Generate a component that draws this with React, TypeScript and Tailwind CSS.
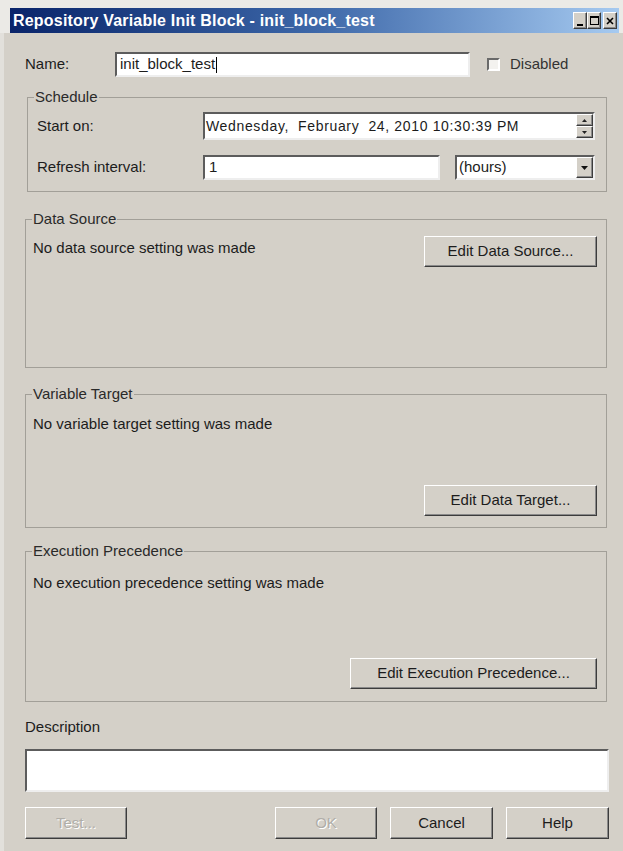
import type { ReactNode } from "react";

const FONT = "font-['Liberation_Sans',Arial,sans-serif]";

// classic sunken field edge
const sunken =
  "border-2 border-t-[#5c5c5c] border-l-[#5c5c5c] border-b-[#eeeeee] border-r-[#eeeeee] bg-white";

// classic raised button edge
const raised =
  "border border-t-[#ffffff] border-l-[#ffffff] border-b-[#3c3c3c] border-r-[#3c3c3c] shadow-[inset_-1px_-1px_0_#8a8a8a] bg-[#d4d0c8]";

const Button = ({
  label,
  width,
  disabled,
}: {
  label: string;
  width: string;
  disabled?: boolean;
}) => (
  <button
    className={`${raised} ${width} flex h-full items-center justify-center text-[15px] ${
      disabled ? "text-[#b0aea8] [text-shadow:1px_1px_0_#ffffff]" : "text-[#1c1c1c]"
    }`}
  >
    {label}
  </button>
);

const GroupBox = ({
  title,
  className,
  bodyClassName,
  children,
}: {
  title: string;
  className: string;
  bodyClassName: string;
  children: ReactNode;
}) => (
  <div className={`flex flex-col border border-[#a29f98] ${className}`}>
    <span className="-mt-[9px] ml-[6px] block h-[16px] w-fit bg-[#d4d0c8] px-[1px] leading-[16px] text-[#2a2a2a]">
      {title}
    </span>
    <div className={`flex flex-1 flex-col ${bodyClassName}`}>{children}</div>
  </div>
);

const TitleButton = ({ children, className = "" }: { children: ReactNode; className?: string }) => (
  <div className={`${raised} flex h-[17px] w-[14px] items-center justify-center ${className}`}>
    {children}
  </div>
);

export default function App() {
  return (
    <div className={`flex h-[851px] w-[623px] flex-col overflow-hidden bg-[#ebeae6] text-[15px] text-[#1c1c1c] ${FONT}`}>
      {/* caption */}
      <div className="mt-[8px] ml-[10px] mr-[4px] flex h-[25px] items-center bg-gradient-to-r from-[#0a246a] via-[#3d67a8] to-[#a6caf0] pl-[3px] pr-[2px]">
        <span className="text-[16px] font-bold tracking-[0.2px] text-white">
          Repository Variable Init Block - init_block_test
        </span>
        <div className="ml-auto flex items-center">
          <TitleButton>
            <span className="mt-[8px] block h-[2px] w-[6px] bg-black" />
          </TitleButton>
          <TitleButton>
            <span className="block h-[9px] w-[9px] border border-t-2 border-black" />
          </TitleButton>
          <TitleButton className="ml-[2px]">
            <svg width="8" height="8" viewBox="0 0 8 8">
              <path d="M1 1L7 7M7 1L1 7" stroke="#000" strokeWidth="1.6" />
            </svg>
          </TitleButton>
        </div>
      </div>

      {/* dialog body */}
      <div className="flex flex-1 flex-col border-l-4 border-[#e2e0db] bg-[#d4d0c8] pl-[21px] pr-[14px]">
        <div className="mt-[19px] flex h-[25px] items-center">
          <span className="w-[90px]">Name:</span>
          <div className={`${sunken} flex h-full w-[355px] items-center pl-[3px]`}>
            init_block_test
            <span className="ml-[1px] block h-[16px] w-px bg-black" />
          </div>
          <div className="ml-[17px] h-[13px] w-[13px] border-2 border-t-[#6a6a6a] border-l-[#6a6a6a] border-b-[#ffffff] border-r-[#ffffff] bg-[#f3f2ef]" />
          <span className="ml-[10px] text-[#333]">Disabled</span>
        </div>

        <GroupBox title="Schedule" className="mt-[20px] ml-[2px] w-[580px]" bodyClassName="pl-[9px] pr-[11px] pb-[11px]">
          <div className="mt-[7px] flex h-[28px] items-center">
            <span className="w-[166px]">Start on:</span>
            <div className={`${sunken} flex h-full flex-1 items-center`}>
              <span className="whitespace-pre pl-[1px] text-[14px] tracking-[0.65px]">
                Wednesday,  February  24, 2010 10:30:39 PM
              </span>
              <div className="ml-auto flex h-full w-[17px] flex-col">
                <div className={`${raised} flex flex-1 items-center justify-center`}>
                  <svg width="5" height="3" viewBox="0 0 5 3">
                    <path d="M2.5 0L5 3H0Z" fill="#222" />
                  </svg>
                </div>
                <div className={`${raised} flex flex-1 items-center justify-center`}>
                  <svg width="5" height="3" viewBox="0 0 5 3">
                    <path d="M0 0H5L2.5 3Z" fill="#222" />
                  </svg>
                </div>
              </div>
            </div>
          </div>
          <div className="mt-[15px] flex h-[25px] items-center">
            <span className="w-[166px]">Refresh interval:</span>
            <div className={`${sunken} flex h-full w-[237px] items-center pl-[4px]`}>1</div>
            <div className={`${sunken} ml-[15px] flex h-full flex-1 items-center pl-[2px]`}>
              (hours)
              <div className={`${raised} ml-auto flex h-full w-[17px] items-center justify-center`}>
                <svg width="7" height="4" viewBox="0 0 7 4">
                  <path d="M0 0H7L3.5 4Z" fill="#111" />
                </svg>
              </div>
            </div>
          </div>
        </GroupBox>

        <GroupBox title="Data Source" className="mt-[27px] h-[149px] w-[582px]" bodyClassName="pl-[7px] pr-[9px]">
          <div className="mt-[9px] flex h-[31px] items-start justify-between">
            <span className="mt-[1px]">No data source setting was made</span>
            <Button label="Edit Data Source..." width="w-[173px]" />
          </div>
        </GroupBox>

        <GroupBox title="Variable Target" className="mt-[26px] h-[134px] w-[582px]" bodyClassName="pl-[7px] pr-[9px] pb-[11px]">
          <span className="mt-[11px]">No variable target setting was made</span>
          <div className="mt-auto flex h-[31px] justify-end">
            <Button label="Edit Data Target..." width="w-[173px]" />
          </div>
        </GroupBox>

        <GroupBox title="Execution Precedence" className="mt-[23px] h-[151px] w-[582px]" bodyClassName="pl-[7px] pr-[9px] pb-[12px]">
          <span className="mt-[13px]">No execution precedence setting was made</span>
          <div className="mt-auto flex h-[31px] justify-end">
            <Button label="Edit Execution Precedence..." width="w-[247px]" />
          </div>
        </GroupBox>

        <span className="mt-[17px] leading-[16px]">Description</span>
        <div className={`${sunken} mt-[14px] h-[43px] w-[584px]`} />

        <div className="mt-[15px] flex h-[32px] w-[584px]">
          <Button label="Test..." width="w-[102px]" disabled />
          <div className="ml-auto flex h-full gap-[13px]">
            <Button label="OK" width="w-[102px]" disabled />
            <Button label="Cancel" width="w-[103px]" />
            <Button label="Help" width="w-[103px]" />
          </div>
        </div>
      </div>
    </div>
  );
}
